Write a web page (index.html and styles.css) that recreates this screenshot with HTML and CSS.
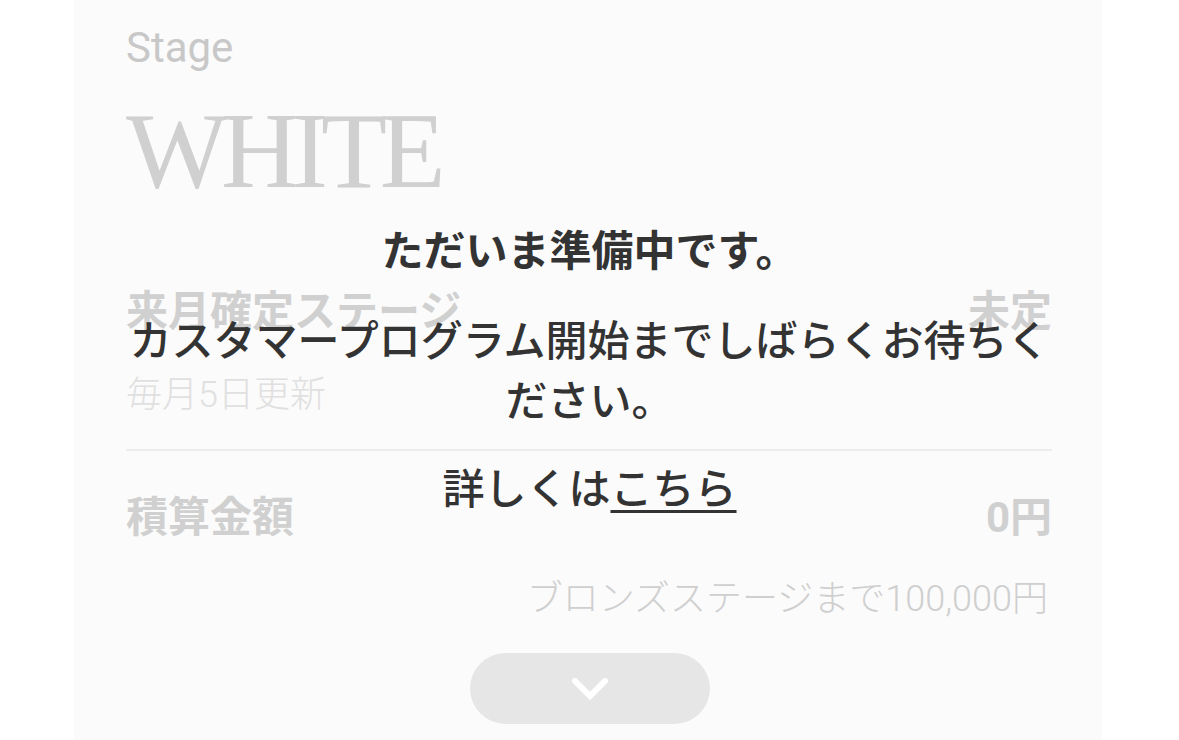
FILE: index.html
```html
<!DOCTYPE html>
<html lang="ja">
<head>
<meta charset="utf-8">
<title>Stage</title>
<link rel="stylesheet" href="styles.css">
</head>
<body>
<div class="page">
  <main class="card">
    <div class="stage-label">Stage</div>
    <div class="stage-name">WHITE</div>
    <div class="row row-next">
      <span class="row-label">来月確定ステージ</span>
      <span class="row-value">未定</span>
    </div>
    <div class="row-note">毎月5日更新</div>
    <hr class="divider">
    <div class="row row-total">
      <span class="row-label">積算金額</span>
      <span class="row-value">0円</span>
    </div>
    <div class="remain">ブロンズステージまで100,000円</div>
    <button class="expand" type="button" aria-label="開く">
      <svg width="36" height="22" viewBox="0 0 36 22"><polyline points="3,3 18,18 33,3" fill="none" stroke="#ffffff" stroke-width="6" stroke-linecap="square" stroke-linejoin="miter"/></svg>
    </button>
  </main>
  <div class="overlay">
    <div class="message">
      <p class="msg-title">ただいま準備中です。</p>
      <p class="msg-body">カスタマープログラム開始までしばらくお待ちください。</p>
      <p class="msg-link">詳しくは<a href="#" class="link">こちら</a></p>
    </div>
  </div>
</div>
</body>
</html>
```
FILE: styles.css
```css
* { box-sizing: border-box; }
html, body {
  margin: 0;
  padding: 0;
  background: #ffffff;
  font-family: "Noto Sans CJK JP", "Noto Sans", sans-serif;
}
.page {
  position: relative;
  width: 1179px;
  height: 740px;
  overflow: hidden;
}
.card {
  margin-left: 74px;
  width: 1028px;
  height: 740px;
  background: #fbfbfb;
  padding: 24px 50px 0 52px;
  display: flex;
  flex-direction: column;
}
.stage-label {
  font-family: Roboto, "Liberation Sans", sans-serif;
  font-size: 42px;
  line-height: 48px;
  color: #c8c8c8;
}
.stage-name {
  margin-top: 24px;
  font-family: "Liberation Serif", serif;
  font-size: 108px;
  line-height: 110px;
  letter-spacing: -7px;
  color: #d0d0d0;
}
.row {
  display: flex;
  justify-content: space-between;
  align-items: center;
  font-family: Roboto, "Noto Sans CJK JP", sans-serif;
  font-size: 42px;
  line-height: 50px;
  font-weight: 700;
  color: #d0d0d0;
}
.row-next { margin-top: 81px; }
.row-note {
  margin-top: 36px;
  font-family: Roboto, "Noto Sans CJK JP", sans-serif;
  font-size: 36px;
  line-height: 44px;
  font-weight: 300;
  color: #e0e0e0;
}
.divider {
  margin: 32px 0 0 0;
  border: 0;
  height: 2px;
  background: #ededed;
}
.row-total { margin-top: 42px; }
.remain {
  margin-top: 34px;
  text-align: right;
  padding-right: 4px;
  font-family: Roboto, "Noto Sans CJK JP", sans-serif;
  font-size: 36px;
  line-height: 44px;
  font-weight: 300;
  color: #cfcfcf;
}
.expand {
  margin: 32px auto 0 auto;
  width: 240px;
  height: 71px;
  border: 0;
  border-radius: 36px;
  background: #e6e6e6;
  display: flex;
  align-items: center;
  justify-content: center;
  padding: 0;
  position: relative;
  left: 1px;
}
.overlay {
  position: absolute;
  inset: 0;
  padding-top: 218px;
}
.message {
  width: 940px;
  margin: 0 auto;
  text-align: center;
  color: #333333;
  font-size: 42px;
  line-height: 60px;
}
.message p { margin: 0; }
.msg-title { font-weight: 700; }
.msg-body { margin-top: 30px !important; font-weight: 500; }
.msg-link { margin-top: 28px !important; font-weight: 500; }
.link {
  color: #333333;
  text-decoration: underline;
  text-decoration-thickness: 3px;
  text-underline-offset: 6px;
}
```
